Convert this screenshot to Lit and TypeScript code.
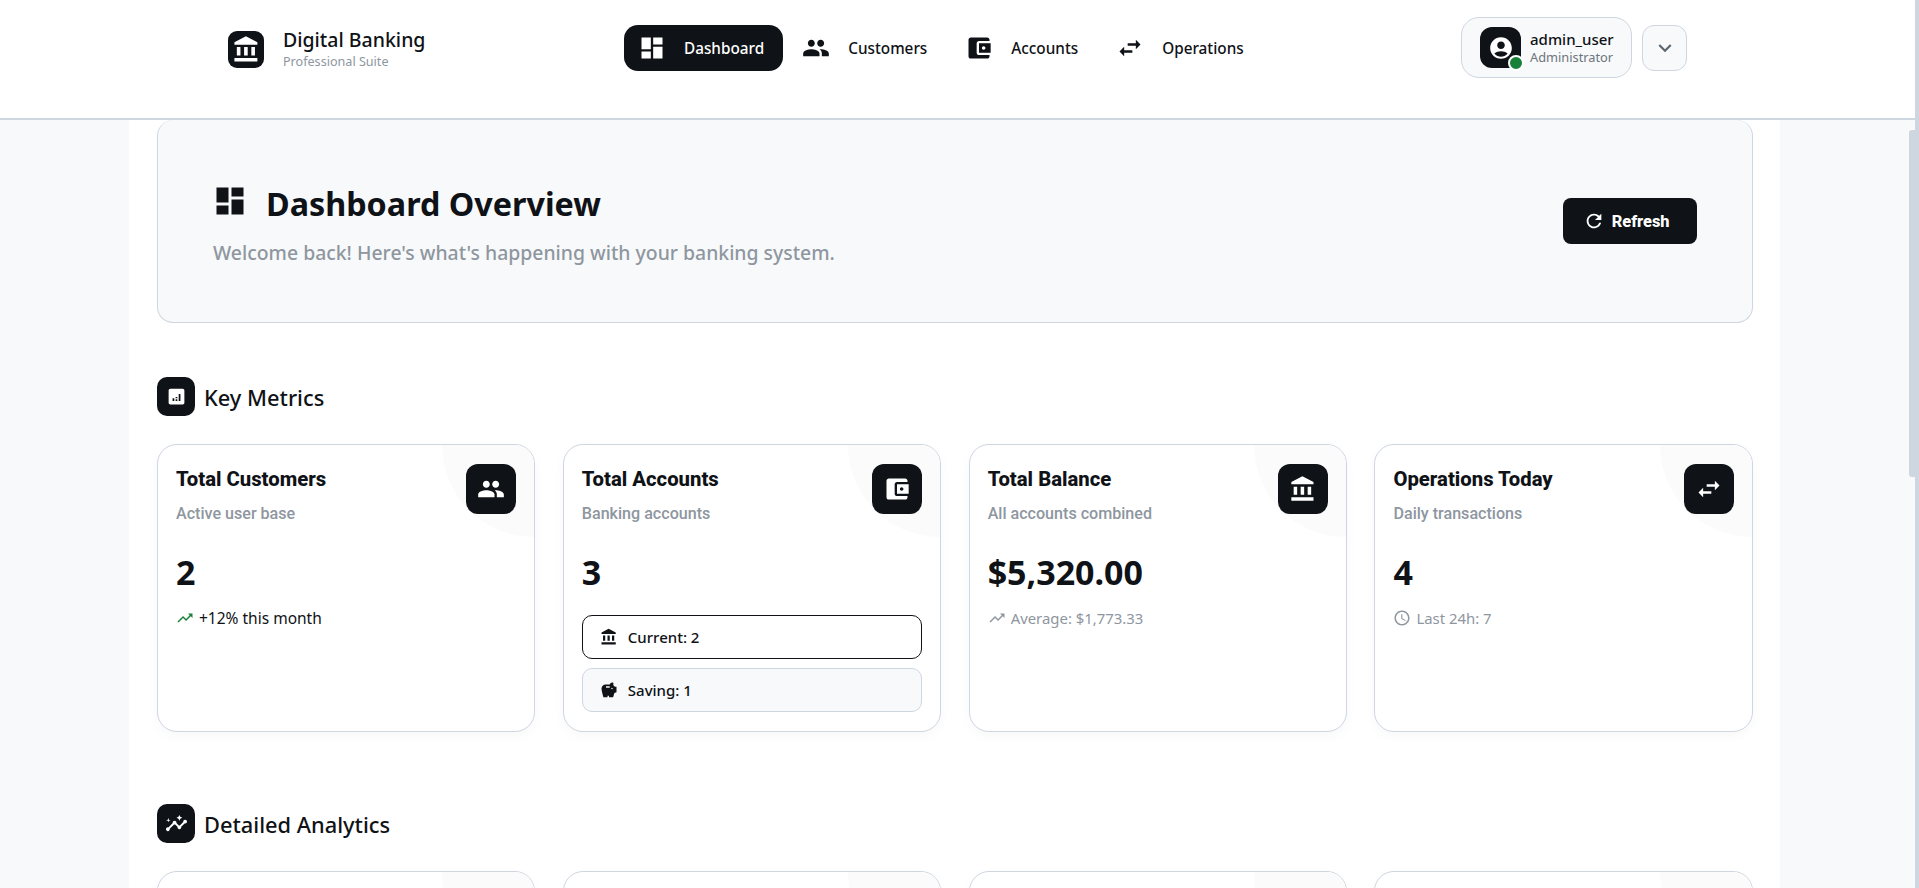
import { LitElement, css, html, svg } from 'lit';
import { customElement } from 'lit/decorators.js';

// material icon paths, all on a 24 box
const icons: Record<string, string> = {
  bank: 'M4 10v7h3v-7H4zm6 0v7h3v-7h-3zM2 22h19v-3H2v3zm14-12v7h3v-7h-3zM11.5 1 2 6v2h19V6l-9.5-5z',
  dashboard: 'M3 13h8V3H3v10zm0 8h8v-6H3v6zm10 0h8V11h-8v10zm0-18v6h8V3h-8z',
  people: 'M16 11c1.66 0 2.99-1.34 2.99-3S17.66 5 16 5s-3 1.34-3 3 1.34 3 3 3zm-8 0c1.66 0 2.99-1.34 2.99-3S9.66 5 8 5 5 6.34 5 8s1.34 3 3 3zm0 2c-2.33 0-7 1.17-7 3.5V19h14v-2.5c0-2.33-4.67-3.5-7-3.5zm8 0c-.29 0-.62.02-.97.05 1.16.84 1.97 1.97 1.97 3.45V19h6v-2.5c0-2.33-4.67-3.5-7-3.5z',
  wallet: 'M21 18v1c0 1.1-.9 2-2 2H5c-1.11 0-2-.9-2-2V5c0-1.1.89-2 2-2h14c1.1 0 2 .9 2 2v1h-9c-1.11 0-2 .9-2 2v8c0 1.1.89 2 2 2h9zm-9-2h10V8H12v8zm4-2.5c-.83 0-1.5-.67-1.5-1.5s.67-1.5 1.5-1.5 1.5.67 1.5 1.5-.67 1.5-1.5 1.5z',
  swap: 'M6.99 11 3 15l3.99 4v-3H14v-2H6.99v-3zM21 9l-3.99-4v3H10v2h7.01v3L21 9z',
  refresh: 'M17.65 6.35C16.2 4.9 14.21 4 12 4c-4.42 0-7.99 3.58-7.99 8s3.57 8 7.99 8c3.73 0 6.84-2.55 7.73-6h-2.08c-.82 2.33-3.04 4-5.65 4-3.31 0-6-2.69-6-6s2.69-6 6-6c1.66 0 3.14.69 4.22 1.78L13 11h7V4l-2.35 2.35z',
  trend: 'M16 6l2.29 2.29-4.88 4.88-4-4L2 16.59 3.41 18l6-6 4 4 6.3-6.29L22 12V6h-6z',
  clock: 'M11.99 2C6.47 2 2 6.48 2 12s4.47 10 9.99 10C17.52 22 22 17.52 22 12S17.52 2 11.99 2zM12 20c-4.42 0-8-3.58-8-8s3.58-8 8-8 8 3.58 8 8-3.58 8-8 8zm.5-13H11v6l5.25 3.15.75-1.23-4.5-2.67V7z',
  piggy: 'M19.83 7.5l-2.27-2.27c.07-.42.18-.81.32-1.15.11-.26.15-.56.09-.87-.13-.72-.83-1.22-1.57-1.21-1.59.03-2.92 1.13-3.3 2.5H7.5C4.46 4.5 2 6.96 2 10c0 3.04 2.5 11.5 2.5 11.5H10v-2h2v2h5.5l1.68-5.59 2.82-.94V7.5h-2.17zM13 9H8V7h5v2zm3 2c-.55 0-1-.45-1-1s.45-1 1-1 1 .45 1 1-.45 1-1 1z',
  analytics: 'M21 8c-1.45 0-2.26 1.44-1.93 2.51l-3.55 3.56c-.3-.09-.74-.09-1.04 0l-2.55-2.55C12.27 10.45 11.46 9 10 9c-1.45 0-2.27 1.44-1.93 2.52l-4.56 4.55C2.44 15.74 1 16.55 1 18c0 1.1.9 2 2 2 1.45 0 2.26-1.44 1.93-2.51l4.55-4.56c.3.09.74.09 1.04 0l2.55 2.55C12.73 16.55 13.54 18 15 18c1.45 0 2.27-1.44 1.93-2.52l3.56-3.55c1.07.33 2.51-.48 2.51-1.93 0-1.1-.9-2-2-2zM15 9l.94-2.07L18 6l-2.06-.93L15 3l-.92 2.07L12 6l2.08.93L15 9zM3.5 11 4 9l2-.5L4 8l-.5-2L3 8l-2 .5L3 9l.5 2z',
  chart: 'M19 3H5c-1.1 0-2 .9-2 2v14c0 1.1.9 2 2 2h14c1.1 0 2-.9 2-2V5c0-1.1-.9-2-2-2zM9.5 17h-2v-3h2v3zm3.5 0h-2v-2h2v2zm0-3h-2v-1.5h2V14zm3.5 3h-2V9h2v8z',
  chevron: 'M7.41 8.59 12 13.17l4.59-4.58L18 10l-6 6-6-6 1.41-1.41z',
  account: 'M12 2C6.48 2 2 6.48 2 12s4.48 10 10 10 10-4.48 10-10S17.52 2 12 2zm0 4c1.93 0 3.5 1.57 3.5 3.5S13.93 13 12 13s-3.5-1.57-3.5-3.5S10.07 6 12 6zm0 14c-2.03 0-4.43-.82-6.14-2.88C7.55 15.8 9.68 15 12 15s4.45.8 6.14 2.12C16.43 19.18 14.03 20 12 20z',
};

const icon = (name: string, size: number) => html`<svg class="ic" width=${size} height=${size} viewBox="0 0 24 24" fill="currentColor">${svg`<path d=${icons[name]}></path>`}</svg>`;

const navItems = [
  { label: 'Dashboard', icon: 'dashboard', active: true },
  { label: 'Customers', icon: 'people', active: false },
  { label: 'Accounts', icon: 'wallet', active: false },
  { label: 'Operations', icon: 'swap', active: false },
];

@customElement('app-root')
export class AppRoot extends LitElement {
  static styles = css`
    :host {
      display: block;
      position: relative;
      height: 888px;
      overflow: hidden;
      background: #f8f9fa;
      font-family: 'Noto Sans', 'Open Sans', sans-serif;
      color: #0f1216;
    }
    .ic { display: block; flex: none; }

    /* navbar */
    .nav {
      height: 118px;
      background: #fff;
      border-bottom: 2px solid #ced6e0;
      display: flex;
      align-items: flex-start;
      padding-left: 228px;
      padding-right: 232px;
    }
    .brand { display: flex; align-items: center; gap: 19px; width: 396px; margin-top: 29px; }
    .logo {
      width: 36px; height: 37px; border-radius: 9px;
      background: #0f1216; color: #fff;
      display: flex; align-items: center; justify-content: center;
    }
    .brand-name { font-size: 19.5px; line-height: 26px; font-weight: 500; margin-top: -2px; }
    .brand-sub { font-size: 12.6px; line-height: 16px; color: #8e96a0; margin-top: 1px; }
    .links { display: flex; gap: 5px; margin-top: 25px; }
    .link {
      height: 46px; padding: 0 19px 0 14px;
      border-radius: 14px;
      display: flex; align-items: center; gap: 18px;
      font-size: 15.3px; font-weight: 500;
    }
    .link.active { background: #0f1216; color: #fff; }
    .user-wrap { margin-left: auto; display: flex; gap: 10px; align-items: center; margin-top: 17px; }
    .user {
      width: 171px; height: 61px; box-sizing: border-box;
      background: #f8f9fa;
      border: 1px solid #ced6e0;
      border-radius: 18px;
      display: flex; align-items: center; gap: 9px;
      padding-left: 18px;
    }
    .avatar {
      position: relative;
      width: 41px; height: 41px; border-radius: 12px;
      background: #0f1216; color: #fff;
      display: flex; align-items: center; justify-content: center;
    }
    .dot {
      position: absolute; right: -3px; bottom: -3px;
      width: 12px; height: 12px; border-radius: 50%;
      background: #198038; border: 2px solid #fff;
    }
    .uname { font-size: 15px; line-height: 19px; font-weight: 500; }
    .urole { font-size: 12.8px; line-height: 17px; color: #6c757d; }
    .more {
      width: 45px; height: 46px; box-sizing: border-box;
      background: #f8f9fa; border: 1px solid #ced6e0; border-radius: 12px;
      color: #5c6670;
      display: flex; align-items: center; justify-content: center;
    }

    /* page */
    .page { width: 1595.7px; margin-left: 129px; padding: 0 27px 0 28px; background: #fff; height: 768px; }
    .hero {
      height: 203px; box-sizing: border-box;
      background: #f8f9fa;
      border: 1px solid #ced6e0;
      border-top: 0;
      border-radius: 16px;
      display: flex; align-items: center; justify-content: space-between;
      padding: 0 55px 0 55px;
    }
    .hero-text { padding-top: 4px; }
    .hero h1 { display: flex; align-items: center; gap: 18px; margin: 0 0 0 -1px; font-size: 32.3px; line-height: 44px; font-weight: 700; }
    .hero-ic { margin-top: -3px; }
    .hero p { margin: 14px 0 0; font-size: 19.4px; line-height: 27px; color: #8e96a0; font-weight: 500; }
    .refresh {
      width: 134px; height: 46px; box-sizing: border-box; border-radius: 8px;
      padding-left: 20px;
      background: #0f1216; color: #fff;
      display: flex; align-items: center; gap: 7px;
      font-family: Roboto, sans-serif; font-size: 16.4px; font-weight: 800;
    }
    .section-head { display: flex; align-items: center; gap: 9px; }
    .section-head h2 { margin: 2px 0 0; font-size: 21.8px; font-weight: 500; line-height: 30px; }
    .section-icon {
      width: 38px; height: 39px; border-radius: 10px;
      background: #0f1216; color: #fff;
      display: flex; align-items: center; justify-content: center;
    }
    .metrics { margin-top: 54px; }
    .analytics { margin-top: 72px; }
    .grid { display: grid; grid-template-columns: repeat(4, 1fr); gap: 27.6px; margin-top: 28px; }
    .card {
      position: relative; overflow: hidden;
      height: 288px; box-sizing: border-box;
      background: #fff;
      border: 1px solid #ced6e0;
      border-radius: 20px;
      padding: 19px 18px;
      box-shadow: 0 4px 12px rgba(15, 18, 22, 0.03);
    }
    .corner {
      position: absolute; top: 0; right: 0;
      width: 92px; height: 92px;
      background: #fbfbfc;
      border-bottom-left-radius: 100%;
    }
    .card-head { position: relative; display: flex; justify-content: space-between; }
    .card-title { font-family: Roboto, sans-serif; font-size: 20.3px; line-height: 24px; font-weight: 800; margin-top: 3px; }
    .card-sub { font-family: Roboto, sans-serif; font-size: 16.1px; line-height: 20px; font-weight: 500; color: #8e96a0; margin-top: 13px; }
    .card-icon {
      width: 50px; height: 50px; border-radius: 12px;
      background: #0f1216; color: #fff;
      display: flex; align-items: center; justify-content: center;
    }
    .value { font-size: 34px; line-height: 44px; font-weight: 700; margin-top: 26px; }
    .foot { display: flex; align-items: center; gap: 5px; font-size: 14.9px; line-height: 20px; margin-top: 14px; }
    .foot.muted { color: #8e96a0; }
    .foot.good { font-size: 15.5px; }
    .foot.good .ic { color: #198038; }
    .chips { display: flex; flex-direction: column; gap: 9px; margin-top: 21px; }
    .chip {
      height: 44px; box-sizing: border-box;
      border-radius: 10px; border: 1px solid #ced6e0;
      background: #f8f9fa;
      display: flex; align-items: center; gap: 10px;
      padding-left: 17px;
      font-size: 15px; font-weight: 500;
    }
    .chip.on { background: #fff; border-color: #0f1216; }

    /* scrollbar, drawn since the page itself does not scroll here */
    .sb-track { position: absolute; top: 0; right: 0; bottom: 0; width: 4px; background: #ced6e0; }
    .sb-thumb { position: absolute; top: 130px; right: 0; width: 10px; height: 347px; background: #ced6e0; border-radius: 3px 0 0 3px; }
  `;

  card(title: string, sub: string, ic: string, value: string, foot: unknown) {
    return html`
      <div class="card">
        <div class="corner"></div>
        <div class="card-head">
          <div>
            <div class="card-title">${title}</div>
            <div class="card-sub">${sub}</div>
          </div>
          <div class="card-icon">${icon(ic, 28)}</div>
        </div>
        <div class="value">${value}</div>
        ${foot}
      </div>
    `;
  }

  render() {
    return html`
      <header class="nav">
        <div class="brand">
          <div class="logo">${icon('bank', 29)}</div>
          <div>
            <div class="brand-name">Digital Banking</div>
            <div class="brand-sub">Professional Suite</div>
          </div>
        </div>
        <nav class="links">
          ${navItems.map(n => html`
            <div class="link ${n.active ? 'active' : ''}">${icon(n.icon, 28)}<span>${n.label}</span></div>
          `)}
        </nav>
        <div class="user-wrap">
          <div class="user">
            <div class="avatar">${icon('account', 26)}<span class="dot"></span></div>
            <div>
              <div class="uname">admin_user</div>
              <div class="urole">Administrator</div>
            </div>
          </div>
          <div class="more">${icon('chevron', 26)}</div>
        </div>
      </header>

      <main class="page">
        <section class="hero">
          <div class="hero-text">
            <h1><span class="hero-ic">${icon('dashboard', 36)}</span><span>Dashboard Overview</span></h1>
            <p>Welcome back! Here's what's happening with your banking system.</p>
          </div>
          <div class="refresh">${icon('refresh', 22)}<span>Refresh</span></div>
        </section>

        <div class="section-head metrics">
          <div class="section-icon">${icon('chart', 21)}</div>
          <h2>Key Metrics</h2>
        </div>
        <div class="grid">
          ${this.card('Total Customers', 'Active user base', 'people', '2', html`
            <div class="foot good">${icon('trend', 18)}<span>+12% this month</span></div>`)}
          ${this.card('Total Accounts', 'Banking accounts', 'wallet', '3', html`
            <div class="chips">
              <div class="chip on">${icon('bank', 18)}<span>Current: 2</span></div>
              <div class="chip">${icon('piggy', 18)}<span>Saving: 1</span></div>
            </div>`)}
          ${this.card('Total Balance', 'All accounts combined', 'bank', '$5,320.00', html`
            <div class="foot muted">${icon('trend', 18)}<span>Average: $1,773.33</span></div>`)}
          ${this.card('Operations Today', 'Daily transactions', 'swap', '4', html`
            <div class="foot muted">${icon('clock', 18)}<span>Last 24h: 7</span></div>`)}
        </div>

        <div class="section-head analytics">
          <div class="section-icon">${icon('analytics', 23)}</div>
          <h2>Detailed Analytics</h2>
        </div>
        <div class="grid">
          ${['a', 'b', 'c', 'd'].map(() => html`<div class="card"><div class="corner"></div></div>`)}
        </div>
      </main>

      <div class="sb-track"><div class="sb-thumb"></div></div>
    `;
  }
}
